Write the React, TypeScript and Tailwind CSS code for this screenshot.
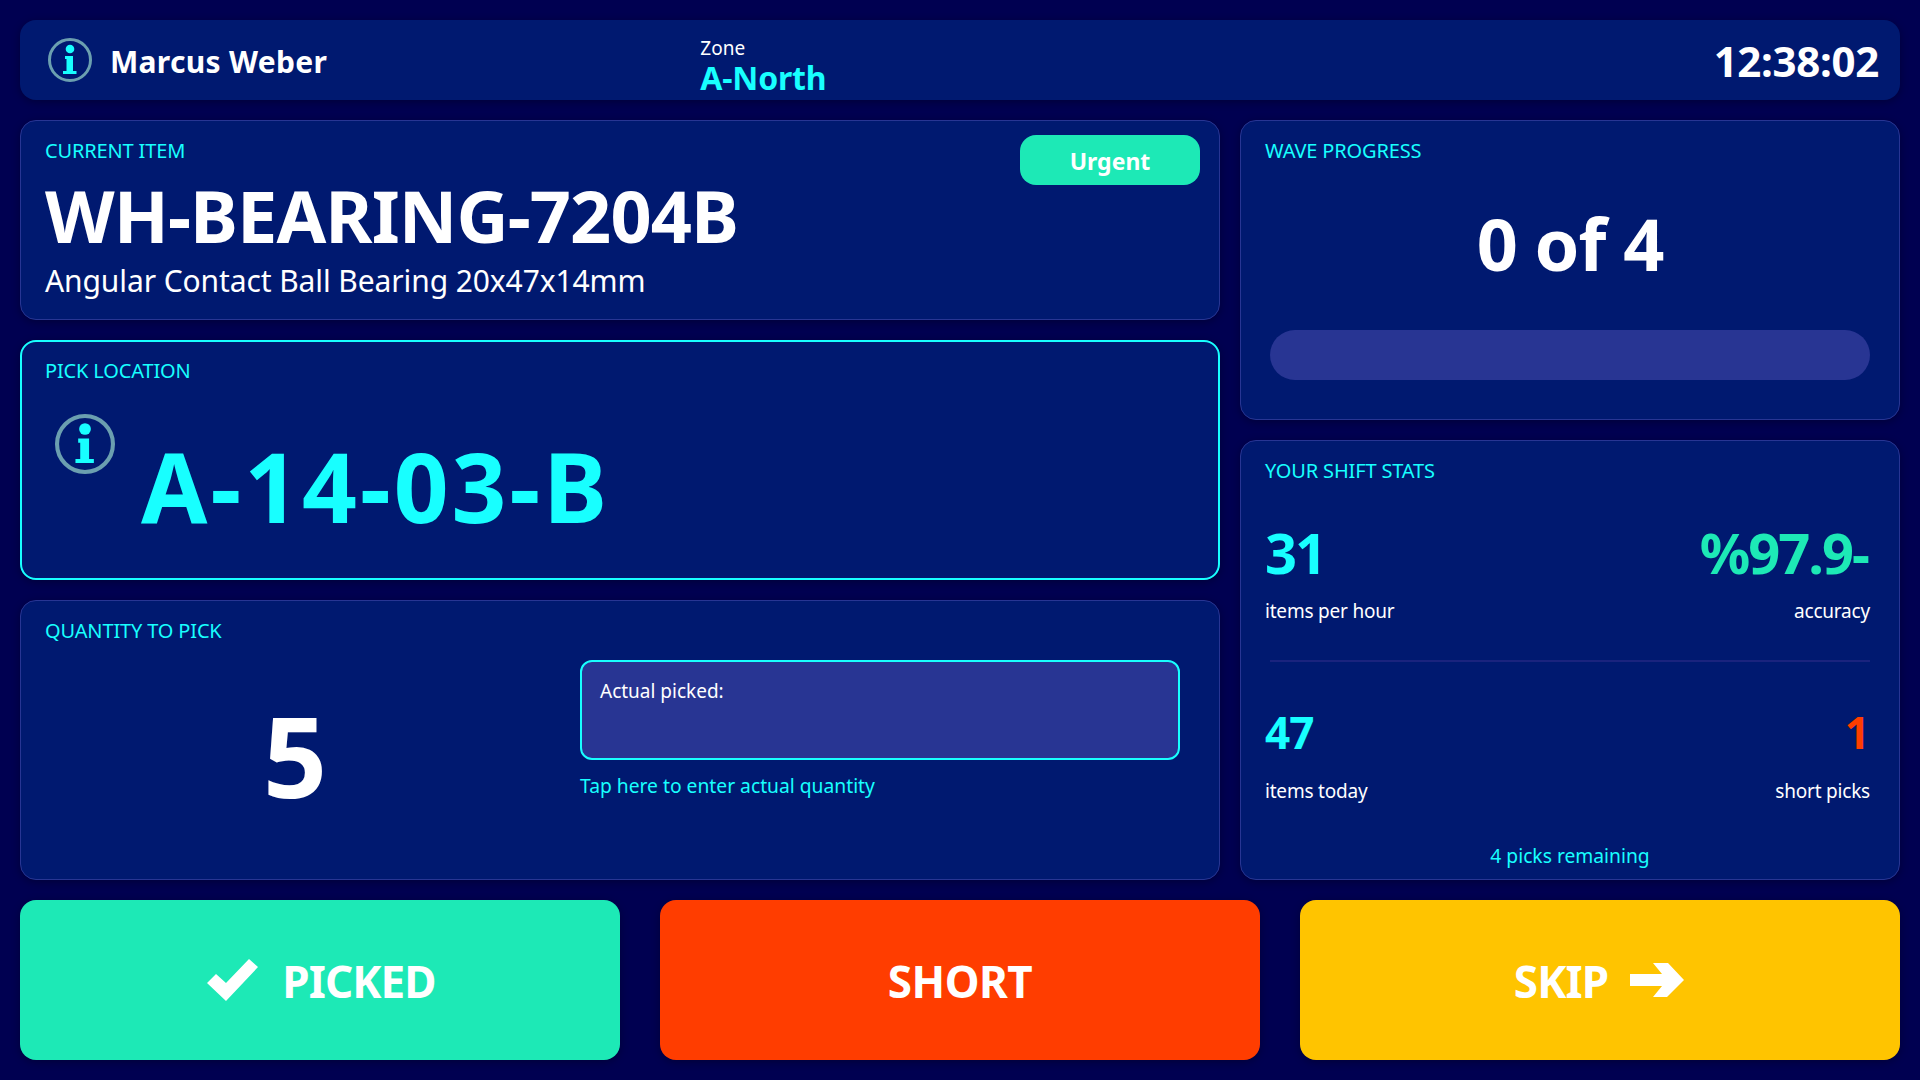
import React from 'react';

const InfoIcon: React.FC<{ className?: string }> = ({ className }) => (
  <svg viewBox="0 0 44 44" className={className} aria-hidden="true">
    <circle cx="22" cy="22" r="20.5" fill="none" stroke="#6b9fb0" strokeWidth="3" />
    <circle cx="22" cy="11" r="4.3" fill="#18ffff" />
    <path d="M17 18h8v15h3.5v3H15v-3h3.5V21H17z" fill="#18ffff" />
  </svg>
);

const Card: React.FC<{ className?: string; children: React.ReactNode }> = ({ className = 'border border-[#283593] px-6 pt-4', children }) => (
  <section className={`relative min-h-0 rounded-2xl bg-[#001970] shadow-[0_2px_8px_rgba(0,0,0,0.3)] ${className}`}>{children}</section>
);

const Label: React.FC<{ children: React.ReactNode }> = ({ children }) => (
  <h2 className="text-[20px] leading-[27px] tracking-[-0.15px] text-[#18ffff]">{children}</h2>
);

const Stat: React.FC<{ value: string; label: string; valueClass: string; labelClass: string; right?: boolean }> = ({ value, label, valueClass, labelClass, right }) => (
  <div className={right ? 'text-right' : ''}>
    <div className={`font-bold ${valueClass}`}>{value}</div>
    <div className={`text-[19px] leading-[27px] tracking-[-0.2px] text-white ${labelClass}`}>{label}</div>
  </div>
);

export default function App() {
  return (
    <div className="flex h-[1080px] w-[1920px] flex-col gap-5 overflow-hidden bg-[#000051] p-5 font-['Noto_Sans','Open_Sans',sans-serif] text-white">
      {/* Header */}
      <header className="grid h-20 shrink-0 grid-cols-3 items-center rounded-2xl bg-[#001970] px-5 shadow-[0_2px_8px_rgba(0,0,0,0.3)]">
        <div className="flex items-center gap-[18px] pl-2">
          <InfoIcon className="h-11 w-11" />
          <span className="mt-[3px] text-[30px] font-bold leading-none tracking-[0.3px]">Marcus Weber</span>
        </div>
        <div className="mt-[12px] pl-[47px]">
          <div className="text-[19px] leading-[23px]">Zone</div>
          <div className="text-[32px] font-bold leading-[35px] tracking-[-0.2px] text-[#18ffff]">A-North</div>
        </div>
        <div className="mt-[2px] pr-[1px] text-right text-[42px] font-bold leading-none tracking-[-0.3px]">12:38:02</div>
      </header>

      {/* Main */}
      <main className="grid min-h-0 flex-1 grid-cols-[1200px_660px] gap-5">
        <div className="grid min-h-0 grid-rows-[200px_240px_280px] gap-5">
          <Card>
            <Label>CURRENT ITEM</Label>
            <div className="mt-[9px] text-[72px] font-bold leading-[84px] tracking-[-0.9px]">WH-BEARING-7204B</div>
            <div className="mt-[2px] text-[30px] leading-[44px] tracking-[-0.1px]">Angular Contact Ball Bearing 20x47x14mm</div>
            <span className="absolute right-[19px] top-[14px] flex h-[50px] w-[180px] items-center justify-center rounded-2xl bg-[#1de9b6] pt-[2px] text-[23px] font-bold">Urgent</span>
          </Card>
          <Card className="border-2 border-[#18ffff] px-[23px] pt-[15px]">
            <Label>PICK LOCATION</Label>
            <div className="mt-[30px] flex items-start gap-[26px] pl-[10px]">
              <InfoIcon className="h-[60px] w-[60px] shrink-0" />
              <div className="mt-[17px] text-[96px] font-bold leading-[110px] tracking-[3px] text-[#18ffff]">A-14-03-B</div>
            </div>
          </Card>
          <Card>
            <Label>QUANTITY TO PICK</Label>
            <div className="mt-4 grid grid-cols-[500px_600px] gap-[35px]">
              <div className="pt-[30px] text-center text-[112px] font-bold leading-[130px]">5</div>
              <div>
                <div className="h-[100px] rounded-xl border-2 border-[#18ffff] bg-[#283593] px-[18px] py-[16px] text-[19px] leading-[27px]">Actual picked:</div>
                <div className="mt-3 text-[19.25px] leading-[27px] text-[#18ffff]">Tap here to enter actual quantity</div>
              </div>
            </div>
          </Card>
        </div>

        <div className="grid min-h-0 grid-rows-[300px_440px] gap-5">
          <Card>
            <Label>WAVE PROGRESS</Label>
            <div className="mt-[29px] text-center text-[72px] font-bold leading-[100px] tracking-[-1px]">0 of 4</div>
            <div className="mx-[5px] mt-[37px] h-[50px] rounded-[25px] bg-[#283593]" />
          </Card>
          <Card className="flex flex-col border border-[#283593] px-6 pt-4">
            <Label>YOUR SHIFT STATS</Label>
            <div className="mt-[34px] flex items-start justify-between pr-[5px]">
              <Stat value="31" label="items per hour" valueClass="text-[56px] leading-[68px] tracking-[-2px] text-[#18ffff]" labelClass="mt-[12px]" />
              <Stat value="%97.9-" label="accuracy" valueClass="pr-[2px] text-[56px] leading-[68px] tracking-[-2px] text-[#1de9b6]" labelClass="mt-[12px]" right />
            </div>
            <div className="mx-[5px] mt-[35px] border-t-2 border-[#1a237e]" />
            <div className="mt-[42px] flex items-start justify-between pr-[5px]">
              <Stat value="47" label="items today" valueClass="text-[44px] leading-[56px] tracking-[-1px] text-[#18ffff]" labelClass="mt-[18px]" />
              <Stat value="1" label="short picks" valueClass="text-[44px] leading-[56px] text-[#ff3d00]" labelClass="mt-[18px]" right />
            </div>
            <div className="mt-[37px] text-center text-[19.25px] leading-[27px] text-[#18ffff]">4 picks remaining</div>
          </Card>
        </div>
      </main>

      {/* Actions */}
      <footer className="grid h-40 shrink-0 grid-cols-3 gap-10 text-[44px] font-bold">
        <button className="flex items-center justify-center gap-6 rounded-2xl bg-[#1de9b6] pl-[3px] pt-[2px] tracking-[-0.9px] shadow-[0_2px_8px_rgba(0,0,0,0.3)]">
          <svg viewBox="0 0 51 42" className="-mt-[2px] h-[42px] w-[51px]" aria-hidden="true">
            <path d="M9 15 0 24 19 42 51 8 42 0 19 24Z" fill="#fff" />
          </svg>
          PICKED
        </button>
        <button className="flex items-center justify-center rounded-2xl bg-[#ff3d00] pt-[2px] tracking-[-0.5px] shadow-[0_2px_8px_rgba(0,0,0,0.3)]">SHORT</button>
        <button className="flex items-center justify-center gap-[22px] rounded-2xl bg-[#ffc400] pr-[2px] pt-[2px] tracking-[-0.9px] shadow-[0_2px_8px_rgba(0,0,0,0.3)]">
          SKIP
          <svg viewBox="0 0 54 34" className="-mt-[3px] h-[34px] w-[54px]" aria-hidden="true">
            <path d="M0 11H32L23 0H38L54 17 37 34H23L32 23H0Z" fill="#fff" />
          </svg>
        </button>
      </footer>
    </div>
  );
}
